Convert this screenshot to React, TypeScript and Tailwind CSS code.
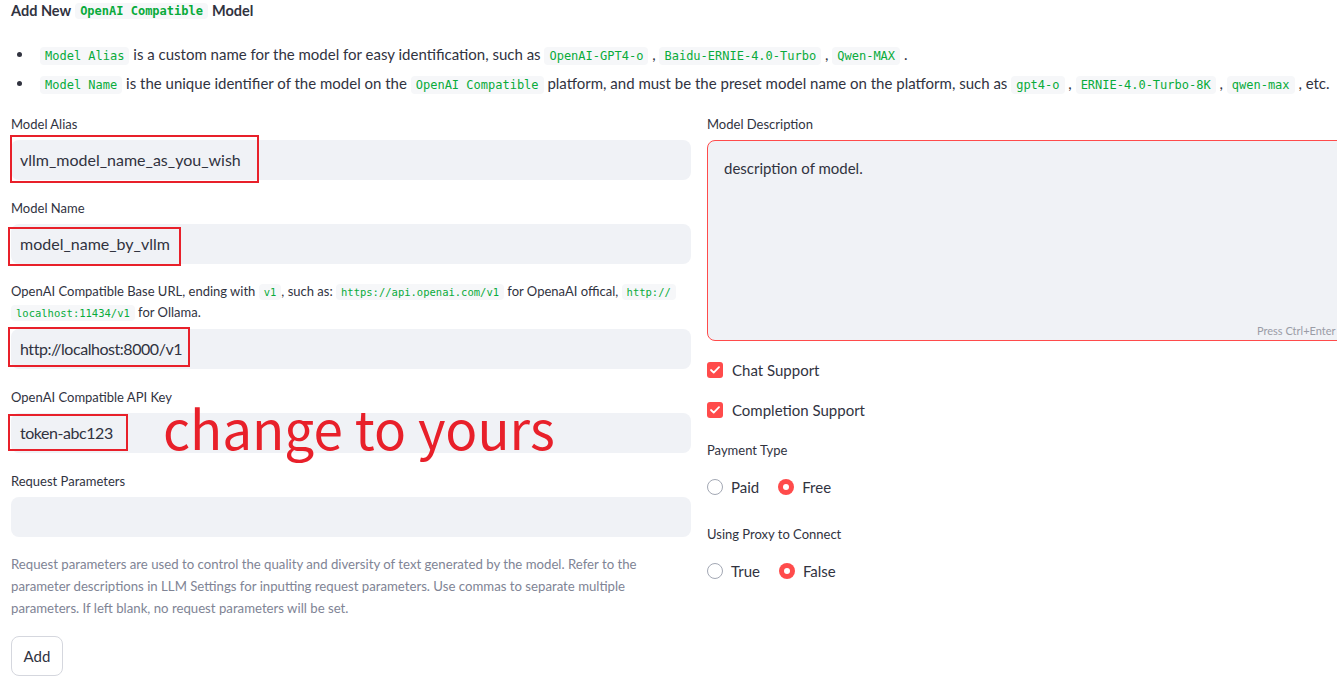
import React from "react";

const Code = ({ children, small }: { children: React.ReactNode; small?: boolean }) => (
  <code
    className={
      "rounded-[4px] bg-[#f6f7f9] px-[5px] py-[2px] leading-none text-[#09ab3b] " +
      (small ? "text-[10.5px]" : "text-[12px]")
    }
    style={{ fontFamily: '"DejaVu Sans Mono", "Liberation Mono", monospace' }}
  >
    {children}
  </code>
);

const Label = ({ children }: { children: React.ReactNode }) => (
  <div className="text-[13px] leading-[16px] text-[#31333f] mb-[8px]">{children}</div>
);

const Input = ({ value, tight }: { value?: string; tight?: boolean }) => (
  <div className="relative h-[40px] w-full rounded-[8px] bg-[#f0f2f6]">
    {value && (
      <div
        className={
          "flex h-full items-center pl-[9px] text-[16px] text-[#31333f] " + (tight ? "tracking-[-0.45px]" : "")
        }
      >
        {value}
      </div>
    )}
  </div>
);

const Check = ({ label }: { label: string }) => (
  <div className="flex h-[24px] items-center gap-[9px]">
    <div className="flex h-[16px] w-[16px] items-center justify-center rounded-[3px] bg-[#ff4b4b]">
      <svg width="10" height="8" viewBox="0 0 10 8" fill="none">
        <path d="M1 4l2.7 2.6L9 1.2" stroke="white" strokeWidth="1.8" strokeLinecap="round" strokeLinejoin="round" />
      </svg>
    </div>
    <span className="text-[15px] text-[#31333f]">{label}</span>
  </div>
);

const Radio = ({ label, on }: { label: string; on?: boolean }) => (
  <div className="flex items-center gap-[8px]">
    {on ? (
      <div className="flex h-[16px] w-[16px] items-center justify-center rounded-full bg-[#ff4b4b]">
        <div className="h-[6px] w-[6px] rounded-full bg-white" />
      </div>
    ) : (
      <div className="h-[16px] w-[16px] rounded-full border border-[#a3a8b4] bg-white" />
    )}
    <span className="text-[15px] text-[#31333f]">{label}</span>
  </div>
);

export default function App() {
  return (
    <div
      className="h-[686px] w-[1337px] overflow-hidden bg-white pl-[11px] pt-[1px] text-[#31333f]"
      style={{ fontFamily: 'Lato, "Noto Sans", sans-serif' }}
    >
      <div className="flex h-[20px] items-center gap-[4px] text-[14.5px] font-bold">
        <span>Add New</span>
        <Code>OpenAI Compatible</Code>
        <span>Model</span>
      </div>

      <ul className="mt-[22px] space-y-[7px] pl-[23px] text-[15px] leading-[22px]" style={{ listStyleType: "disc" }}>
        <li className="whitespace-nowrap pl-[6px]">
          <Code>Model Alias</Code> is a custom name for the model for easy identification, such as{" "}
          <Code>OpenAI-GPT4-o</Code> , <Code>Baidu-ERNIE-4.0-Turbo</Code> , <Code>Qwen-MAX</Code> .
        </li>
        <li className="whitespace-nowrap pl-[6px]">
          <Code>Model Name</Code> is the unique identifier of the model on the <Code>OpenAI Compatible</Code>{" "}
          platform, and must be the preset model name on the platform, such as <Code>gpt4-o</Code> ,{" "}
          <Code>ERNIE-4.0-Turbo-8K</Code> , <Code>qwen-max</Code> , etc.
        </li>
      </ul>

      <div className="mt-[22px] flex gap-[16px]">
        {/* Left column */}
        <div className="w-[680px] shrink-0">
          <Label>Model Alias</Label>
          <div className="relative">
            <Input value="vllm_model_name_as_you_wish" />
            <div className="absolute left-[-1px] top-[-5px] h-[48px] w-[249px] border-2 border-[#e8202a]" />
          </div>

          <div className="mt-[20px]">
            <Label>Model Name</Label>
            <div className="relative">
              <Input value="model_name_by_vllm" />
              <div className="absolute left-[-3px] top-[3px] h-[39px] w-[173px] border-2 border-[#e8202a]" />
            </div>
          </div>

          <div className="mt-[17px]">
            <div className="mb-[6px] text-[13px] leading-[21px] text-[#31333f]">
              OpenAI Compatible Base URL, ending with <Code small>v1</Code>, such as:{" "}
              <Code small>https://api.openai.com/v1</Code> for OpenaAI offical, <Code small>http://</Code>
              <br />
              <Code small>localhost:11434/v1</Code> for Ollama.
            </div>
            <div className="relative">
              <Input value="http://localhost:8000/v1" tight />
              <div className="absolute left-[-3px] top-[-2px] h-[40px] w-[182px] border-2 border-[#e8202a]" />
            </div>
          </div>

          <div className="mt-[20px]">
            <Label>OpenAI Compatible API Key</Label>
            <div className="relative">
              <Input value="token-abc123" tight />
              <div className="absolute left-[-3px] top-[1px] h-[37px] w-[120px] border-2 border-[#e8202a]" />
              <div
                className="absolute left-[152px] top-[-18px] whitespace-nowrap text-[53px] leading-[64px] text-[#e8202a]"
                style={{ fontFamily: '"Noto Sans CJK SC", "Noto Sans", sans-serif' }}
              >
                change to yours
              </div>
            </div>
          </div>

          <div className="mt-[20px]">
            <Label>Request Parameters</Label>
            <Input />
          </div>

          <div className="mt-[16px] text-[13.2px] leading-[22px] text-[#808495]">
            Request parameters are used to control the quality and diversity of text generated by the model. Refer to the
            <br />
            parameter descriptions in LLM Settings for inputting request parameters. Use commas to separate multiple
            <br />
            parameters. If left blank, no request parameters will be set.
          </div>

          <button className="mt-[17px] flex h-[40px] w-[52px] items-center justify-center rounded-[8px] border border-[#d5d7de] bg-white text-[15px] text-[#31333f]">
            Add
          </button>
        </div>

        {/* Right column */}
        <div className="w-[680px] shrink-0">
          <Label>Model Description</Label>
          <div className="relative h-[201px] w-full rounded-[8px] border border-[#ff4b4b] bg-[#f0f2f6]">
            <div className="pl-[16px] pt-[17px] text-[15px] leading-[20px]">description of model.</div>
            <div className="absolute bottom-[1px] left-[549px] text-[11px] text-[#9a9ca6]">Press Ctrl+Enter</div>
          </div>

          <div className="mt-[17px]">
            <Check label="Chat Support" />
          </div>
          <div className="mt-[16px]">
            <Check label="Completion Support" />
          </div>

          <div className="mt-[20px]">
            <Label>Payment Type</Label>
            <div className="flex h-[30px] mt-[14px] items-center gap-[19px]">
              <Radio label="Paid" />
              <Radio label="Free" on />
            </div>
          </div>

          <div className="mt-[24px]">
            <Label>Using Proxy to Connect</Label>
            <div className="flex h-[30px] mt-[14px] items-center gap-[19px]">
              <Radio label="True" />
              <Radio label="False" on />
            </div>
          </div>
        </div>
      </div>
    </div>
  );
}
